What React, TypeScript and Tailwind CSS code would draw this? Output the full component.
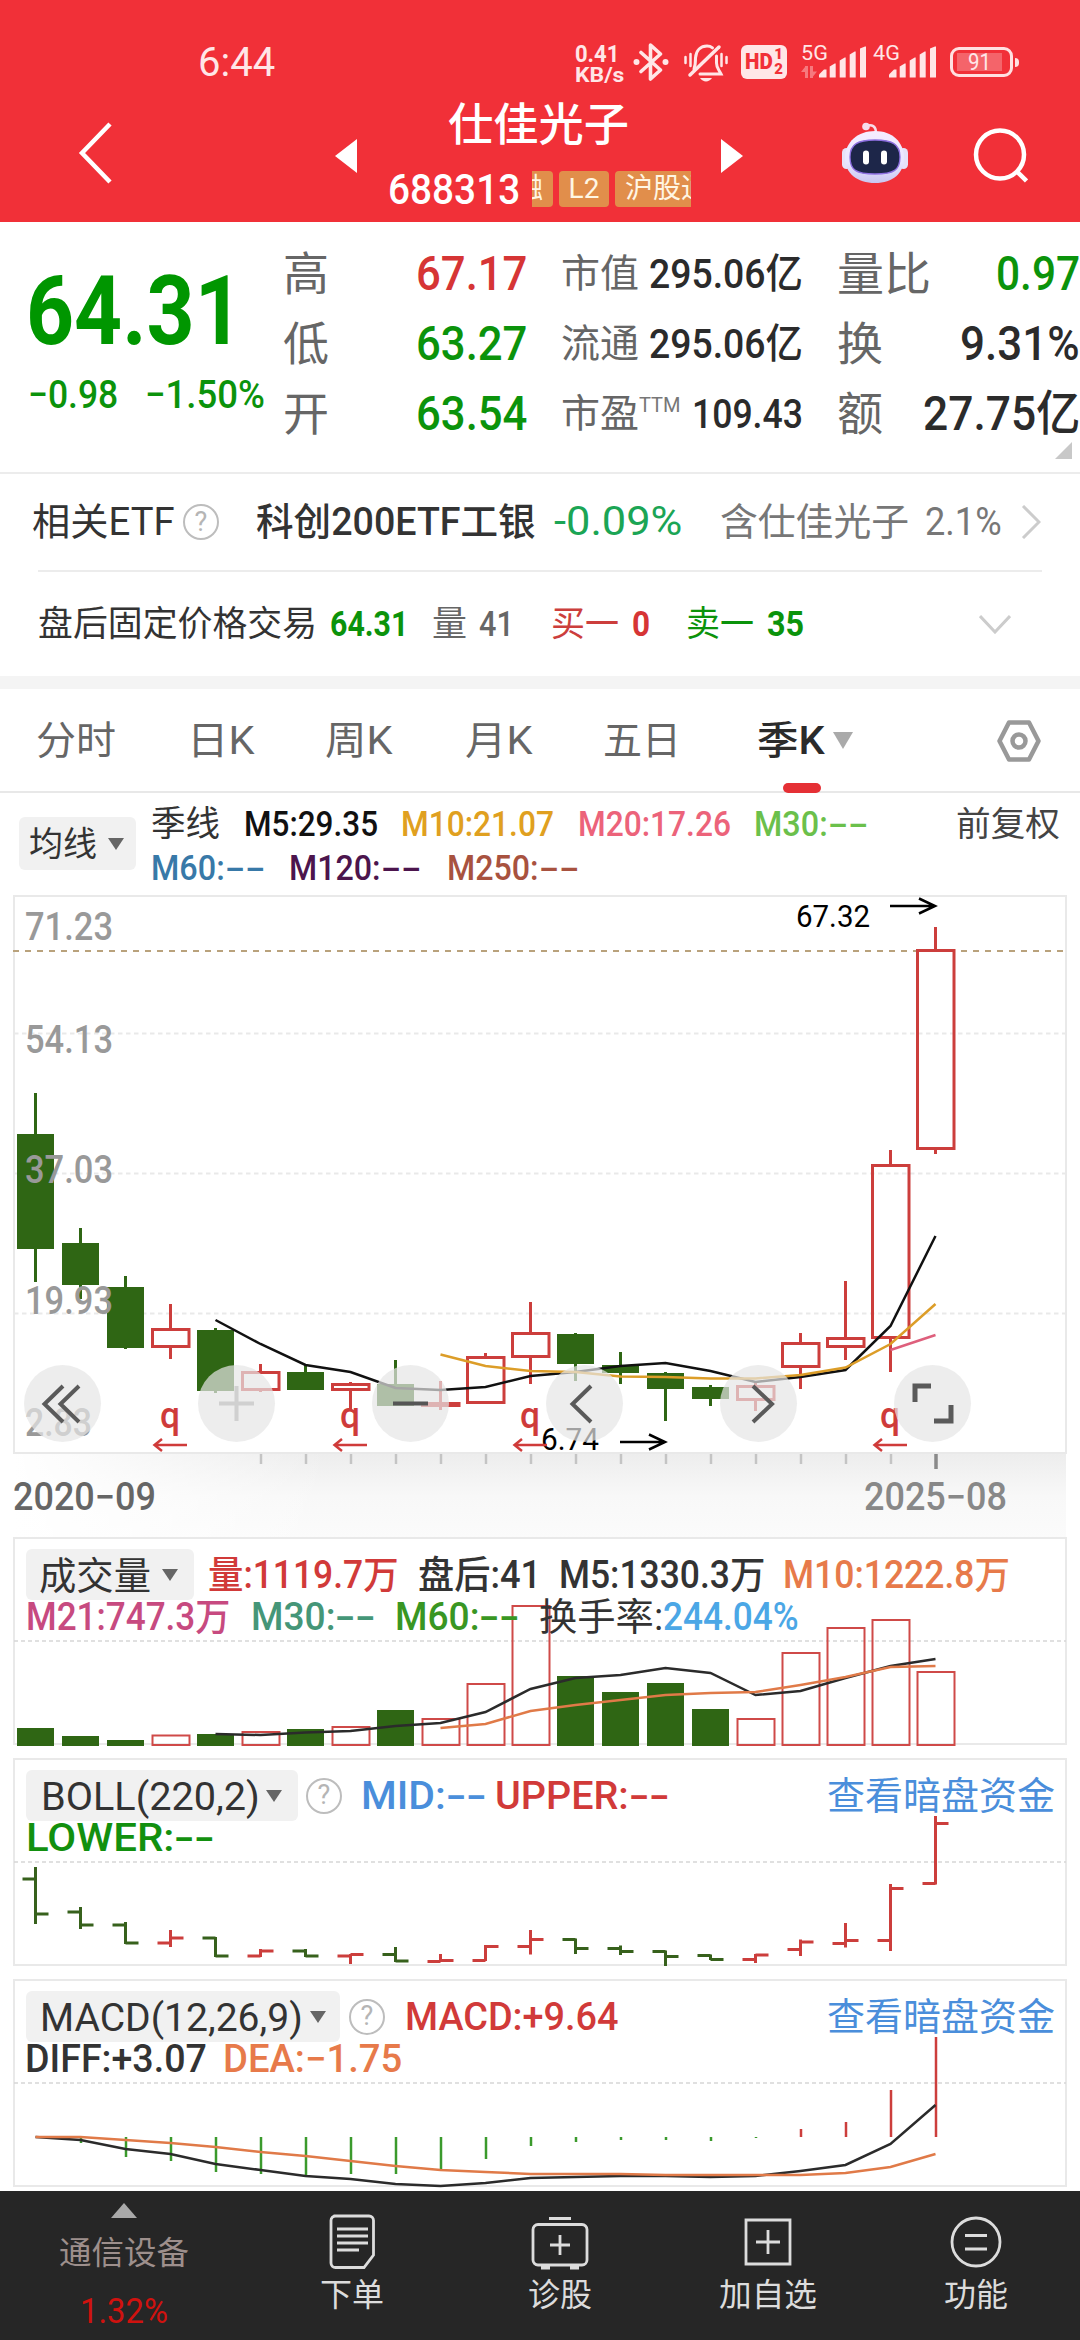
import { useLayoutEffect, useRef, useState } from 'react';
import type { ReactNode } from 'react';
import clsx from 'clsx';

const RED = '#cc3e3c';
const GREEN = '#2f6614';

// [up, high, bodyTop, bodyBottom, low]
const CANDLES: [number, number, number, number, number][] = [
    [0, 1093, 1134, 1249, 1282],
    [0, 1228, 1243, 1285, 1299],
    [0, 1276, 1287, 1348, 1349],
    [1, 1304, 1328, 1348, 1359],
    [0, 1328, 1330, 1391, 1393],
    [1, 1364, 1371, 1391, 1392],
    [0, 1365, 1372, 1390, 1390],
    [1, 1382, 1383, 1391, 1410],
    [0, 1360, 1384, 1406, 1406],
    [1, 1381, 1402, 1407, 1410],
    [1, 1353, 1356, 1404, 1404],
    [1, 1302, 1332, 1358, 1384],
    [0, 1333, 1334, 1364, 1381],
    [0, 1352, 1365, 1373, 1384],
    [0, 1372, 1373, 1389, 1421],
    [0, 1385, 1387, 1399, 1406],
    [1, 1382, 1385, 1401, 1411],
    [1, 1333, 1342, 1368, 1389],
    [1, 1281, 1337, 1348, 1360],
    [1, 1150, 1164, 1339, 1372],
    [1, 927, 949, 1150, 1154],
];

const MA5 = [1320, 1344, 1365, 1372, 1388, 1390, 1387, 1376, 1372, 1366, 1363, 1371, 1382, 1377, 1370, 1326, 1236];
const MA10 = [1354.5, 1366, 1371, 1372, 1376.5, 1377, 1378.5, 1378.5, 1375, 1367.5, 1344, 1304];
const MA20 = [1350, 1335];

const VOLUMES = [
    1728, 1736, 1740, 1735.5, 1734, 1732, 1729, 1727, 1710, 1719, 1684, 1606, 1676, 1692, 1683, 1709, 1719, 1653,
    1628, 1620, 1672,
];
const VOL_MA5 = [1734, 1735, 1732.5, 1731, 1726, 1723, 1712, 1689, 1678, 1675, 1668, 1673, 1695, 1691, 1678, 1666, 1659];
const VOL_MA10 = [1728, 1724, 1711, 1705, 1700, 1695, 1693, 1692, 1685, 1677, 1667, 1666];

// [high, low, open, close]
const OHLC = [
    [1867, 1924, 1879, 1914],
    [1907, 1929, 1912, 1925],
    [1922, 1944, 1925, 1943],
    [1930, 1947, 1943, 1938],
    [1937, 1957, 1938, 1956],
    [1949, 1957, 1956, 1951],
    [1949, 1957, 1951, 1956],
    [1954, 1964, 1956, 1954.5],
    [1947, 1962, 1954.5, 1961],
    [1954, 1962, 1961.5, 1960.5],
    [1945, 1961, 1960.5, 1946.5],
    [1930, 1954.5, 1946.5, 1939.5],
    [1938.5, 1954, 1939.5, 1948.5],
    [1945.5, 1955, 1948.5, 1951.5],
    [1950.5, 1966, 1951.5, 1956.5],
    [1954.5, 1960, 1955.5, 1959.5],
    [1954, 1963, 1959.5, 1955],
    [1939.5, 1956, 1949.5, 1942],
    [1923, 1947.5, 1943.5, 1940.5],
    [1884, 1951, 1940.5, 1888.5],
    [1816, 1884.5, 1883.5, 1823.5],
];

const MACD = [
    2137, 2143, 2157, 2161, 2172, 2174, 2175, 2174, 2174, 2169, 2159, 2146, 2142, 2140, 2140, 2141, 2138, 2129, 2122,
    2090, 2037,
];
const DIFF = [
    2137, 2140, 2149, 2154, 2164, 2170, 2176, 2179, 2184, 2186, 2183, 2178, 2177, 2176, 2176, 2177, 2176, 2171, 2165,
    2144, 2105,
];
const DEA = [
    2137, 2137, 2140, 2143, 2147, 2152, 2156, 2161, 2166, 2170, 2172, 2174, 2174, 2174, 2175, 2175, 2175, 2175, 2173,
    2167, 2154,
];

const cx = (i: number) => 35.5 + 45 * i;
const points = (ys: number[], start = 0) => ys.map((y, i) => `${cx(start + i)},${y}`).join(' ');

// Squeezes a label horizontally so that it always takes exactly `w` pixels.
function Fit({ w, className, children }: { w: number; className?: string; children: ReactNode }) {
    const ref = useRef<HTMLSpanElement>(null);
    const [scale, setScale] = useState(1);

    useLayoutEffect(() => {
        if (ref.current) setScale(w / ref.current.offsetWidth);
    }, [w]);

    return (
        <span className={clsx('block shrink-0 whitespace-nowrap', className)} style={{ width: w }}>
            <span ref={ref} className="inline-block origin-left" style={{ transform: `scaleX(${scale})` }}>
                {children}
            </span>
        </span>
    );
}

// An indicator that has no value yet: its name, then two wide dashes.
function Empty({ w, name, className }: { w: number; name: string; className?: string }) {
    return (
        <span className={clsx('flex shrink-0', className)}>
            <Fit w={w - 41}>{name}:</Fit>
            <Fit w={41}>--</Fit>
        </span>
    );
}

function Caret({ className }: { className?: string }) {
    return (
        <svg viewBox="0 0 16 12" className={clsx('h-3 w-4 shrink-0', className)}>
            <path d="M0 0h16L8 12z" fill="currentColor" />
        </svg>
    );
}

function Help({ className }: { className?: string }) {
    return (
        <span
            className={clsx(
                'flex size-[36px] shrink-0 items-center justify-center rounded-full border-[2.5px] border-[#bdbdbd] text-[27px] leading-none text-[#b5b5b5]',
                className,
            )}
        >
            ?
        </span>
    );
}

function Signal() {
    return (
        <svg viewBox="0 0 48 32" className="h-8 w-12 shrink-0" fill="#ffe6e7">
            <path d="M0 31.500v-3l5-5h2.500v8z" />
            <path d="M10.700 31.500v-11l5-3h1v14z" />
            <path d="M20.700 31.500v-17l5-3h1v20z" />
            <path d="M30.700 31.500v-23l5-3h1v26z" />
            <path d="M41 31.500v-29l5-2h1v31z" />
        </svg>
    );
}

function StatusBar() {
    return (
        <div className="flex h-[98px] items-start pt-[43px] text-[#ffe6e7]">
            <Fit w={77} className="ml-[198px] text-[40px] leading-[40px]">6:44</Fit>
            <div className="ml-[300px] flex w-[50px] flex-col pt-[2px] font-bold">
                <Fit w={44} className="text-[23px] leading-[20px]">0.41</Fit>
                <Fit w={49} className="text-[21px] leading-[20px]">KB/s</Fit>
            </div>
            <svg viewBox="0 0 36 38" className="ml-[8px] h-[38px] w-9" fill="none" stroke="currentColor" strokeWidth="3.600" strokeLinejoin="round" strokeLinecap="round">
                <path d="M8 9.500 27.500 27 17.500 36V2L27.500 11 8 28.500" />
                <circle cx="3.500" cy="19" r="3" fill="currentColor" stroke="none" />
                <circle cx="32.500" cy="19" r="3" fill="currentColor" stroke="none" />
            </svg>
            <svg viewBox="0 0 44 38" className="ml-[15px] mt-px h-[38px] w-11" fill="none" stroke="currentColor" strokeWidth="3" strokeLinecap="round">
                <path d="M1.500 13v6M6.500 10v12M42.500 13v6M37.500 10v12" strokeWidth="2.500" />
                <path d="M6 31 35 3" strokeWidth="3.500" />
                <path d="M10 25c1.500-4 1.500-7 1.500-11C12 6 17 2 23 2c2 0 4 .6 5.500 1.800M32.500 12v7c0 5 2 6 4.500 11H16" />
                <path d="M16 34c3 4.500 9 4.500 12 0z" fill="currentColor" stroke="none" />
            </svg>
            <div className="ml-[13px] mt-[2px] flex h-[34px] w-[46px] items-center justify-center rounded-[6px] bg-[#ffe6e7] text-[#f13038]">
                <Fit w={28} className="text-[22px] leading-none font-black">HD</Fit>
                <span className="ml-px flex flex-col text-[15px] leading-[15px] font-black">
                    <span>1</span>
                    <span>2</span>
                </span>
            </div>
            <div className="ml-[14px] flex w-[18px] flex-col">
                <Fit w={27} className="text-[20px] leading-5">5G</Fit>
                <svg viewBox="0 0 16 12" className="mt-[3px] h-3 w-4 opacity-40" fill="currentColor">
                    <path d="M4 12V0h3v12zM0 6l4-5v5zM9 12V0h3v12zM16 5.500l-4 5v-5z" />
                </svg>
            </div>
            <div className="mt-[3px]">
                <Signal />
            </div>
            <Fit w={27} className="ml-[6px] text-[20px] leading-5">4G</Fit>
            <div className="-ml-[11px] mt-[3px]">
                <Signal />
            </div>
            <div className="ml-[13px] mt-[4px] flex h-[30px] w-[63px] items-center rounded-[9px] border-[3px] border-[#ffe0e1] p-1">
                <div className="flex h-[18px] w-[45px] items-center justify-center bg-white/25">
                    <Fit w={23} className="text-[24px] leading-[18px]">91</Fit>
                </div>
            </div>
            <div className="ml-[2px] mt-[15px] h-[9px] w-1 rounded-r bg-[#ffe0e1]" />
        </div>
    );
}

function Robot() {
    return (
        <svg viewBox="0 0 66 62" className="h-[62px] w-[66px]">
            <defs>
                <linearGradient id="shell" x1="0" y1="0" x2="0" y2="1">
                    <stop offset="0" stopColor="#f6ecff" />
                    <stop offset="0.600" stopColor="#e9e6ff" />
                    <stop offset="1" stopColor="#c9c6f0" />
                </linearGradient>
            </defs>
            <path d="M24 4c6-2 10 0 10 7" fill="none" stroke="#f8dbe8" strokeWidth="2.500" />
            <circle cx="24" cy="4.500" r="3.800" fill="#f6dcec" />
            <rect x="0" y="26" width="9" height="21" rx="4.500" fill="#e6e2f8" />
            <rect x="57" y="26" width="9" height="21" rx="4.500" fill="#e6e2f8" />
            <path d="M33 9c17 0 29 11 29 27 0 15-11 25-29 25S3 51 3 36C3 20 16 9 33 9z" fill="url(#shell)" />
            <path d="M33 18c17 0 25 4 25 17s-6 17-25 17S8 48 8 35s8-17 25-17z" fill="#1d2649" stroke="#8d6fe0" strokeWidth="1.300" />
            <rect x="21" y="28.500" width="6" height="14" rx="3" fill="#fff" />
            <rect x="39" y="28.500" width="6" height="14" rx="3" fill="#fff" />
        </svg>
    );
}

function TitleBar() {
    return (
        <div className="flex h-[124px] items-start text-white">
            <svg viewBox="0 0 34 62" className="ml-[78px] mt-[24px] h-[62px] w-[34px]" fill="none" stroke="currentColor" strokeWidth="4.500">
                <path d="M32 2 4 31l28 29" />
            </svg>
            <svg viewBox="0 0 22 34" className="ml-[223px] mt-[41px] h-[34px] w-[22px]">
                <path d="M22 0v34L0 17z" fill="currentColor" />
            </svg>
            <div className="ml-[31px] flex w-[304px] flex-col">
                <Fit w={181} className="ml-[60px] mt-[2px] text-[45px] leading-[52px] font-medium">仕佳光子</Fit>
                <div className="mt-[19px] flex h-[36px] items-center">
                    <Fit w={132} className="mt-[2px] text-[42px] leading-9 font-medium">688313</Fit>
                    <div className="ml-[12px] flex h-9 w-[159px] justify-end overflow-hidden text-[28px] leading-9 text-[#fff6e4]">
                        <span className="-ml-12 shrink-0 rounded-[4px] bg-[#e18e4b] pr-[10px]">融</span>
                        <span className="ml-[6px] w-[50px] shrink-0 rounded-[4px] bg-[#e18e4b] text-center">L2</span>
                        <span className="-mr-[27px] ml-[6px] w-[103px] shrink-0 rounded-[4px] bg-[#e18e4b] pl-[10px]">沪股通</span>
                    </div>
                </div>
            </div>
            <svg viewBox="0 0 22 34" className="ml-[29px] mt-[41px] h-[34px] w-[22px]">
                <path d="M0 0v34l22-17z" fill="currentColor" />
            </svg>
            <div className="ml-[99px] mt-[24px]">
                <Robot />
            </div>
            <svg viewBox="0 0 56 56" className="ml-[64px] mt-[29px] size-14" fill="none" stroke="currentColor" strokeWidth="4.500">
                <circle cx="28" cy="27.500" r="24" />
                <path d="m44.500 44 10 10" />
            </svg>
        </div>
    );
}

const QUOTES = [
    { a: '高', av: '67.17', ac: 'text-[#d63535]', b: '市值', bv: '295.06亿', bw: 154, c: '量比', cw: 94, cv: '0.97', cc: 'text-[#0b930b]', vw: 84 },
    { a: '低', av: '63.27', ac: 'text-[#0b930b]', b: '流通', bv: '295.06亿', bw: 154, c: '换', cw: 46, cv: '9.31%', cc: 'text-[#2b2b2b]', vw: 120 },
    { a: '开', av: '63.54', ac: 'text-[#0b930b]', b: '市盈', bv: '109.43', bw: 111, c: '额', cw: 46, cv: '27.75亿', cc: 'text-[#2b2b2b]', vw: 157 },
];

function Quote() {
    return (
        <section className="relative flex h-[252px] border-b-2 border-[#ececec]">
            <div className="w-[283px] shrink-0 text-[#009600]">
                <Fit w={217} className="ml-[26px] mt-[41px] text-[97px] leading-[97px] font-bold">64.31</Fit>
                <div className="mt-[13px] flex text-[39px] leading-[44px] font-medium text-[#0b930b]">
                    <Fit w={90} className="ml-[28px]">−0.98</Fit>
                    <Fit w={120} className="ml-[27px]">−1.50%</Fit>
                </div>
            </div>
            <div className="pt-[17px]">
                {QUOTES.map(q => (
                    <div key={q.a} className="flex h-[70px] w-[797px] items-center">
                        <span className="w-[46px] text-[46px] leading-[70px] text-[#666]">{q.a}</span>
                        <Fit w={111} className={clsx('ml-[87px] text-[48px] leading-[70px] font-medium', q.ac)}>{q.av}</Fit>
                        <span className="ml-[34px] w-[78px] text-[39px] leading-[70px] text-[#666]">{q.b}</span>
                        <span className="flex w-[164px] justify-end text-[#2b2b2b]">
                            {q.b === '市盈' && <Fit w={42} className="mt-[6px] mr-auto text-[21px] leading-[40px] text-[#777]">TTM</Fit>}
                            <Fit w={q.bw} className="text-[41px] leading-[70px] font-medium">{q.bv}</Fit>
                        </span>
                        <Fit w={q.cw} className="ml-[34px] text-[46px] leading-[70px] text-[#666]">{q.c}</Fit>
                        <Fit w={q.vw} className={clsx('ml-auto text-[48px] leading-[70px] font-medium', q.cc)}>{q.cv}</Fit>
                    </div>
                ))}
            </div>
            <svg viewBox="0 0 17 17" className="absolute right-2 bottom-[13px] size-[17px]">
                <path d="M17 0v17H0z" fill="#c8c8c8" />
            </svg>
        </section>
    );
}

function EtfRow() {
    return (
        <div className="flex h-24 items-center text-[38px] leading-[60px] text-[#333]">
            <Fit w={143} className="ml-8">相关ETF</Fit>
            <Help className="ml-[8px]" />
            <Fit w={280} className="ml-[37px] font-medium">科创200ETF工银</Fit>
            <Fit w={128} className="ml-[18px] text-[40px] text-[#1ba555]">-0.09%</Fit>
            <Fit w={189} className="ml-[38px] text-[#777]">含仕佳光子</Fit>
            <Fit w={77} className="ml-[16px] text-[#777]">2.1%</Fit>
            <svg viewBox="0 0 20 34" className="ml-[19px] h-[34px] w-5" fill="none" stroke="#ccc" strokeWidth="3">
                <path d="m2 1 16 16L2 33" />
            </svg>
        </div>
    );
}

function AfterHours() {
    return (
        <div className="mx-[38px] flex h-[106px] items-center border-t-2 border-[#ececec] pt-px text-[35px] leading-[60px]">
            <Fit w={279} className="text-[#333]">盘后固定价格交易</Fit>
            <Fit w={78} className="ml-[13px] font-bold text-[#0b930b]">64.31</Fit>
            <Fit w={35} className="ml-[24px] text-[#666]">量</Fit>
            <Fit w={35} className="ml-[12px] font-medium text-[#666]">41</Fit>
            <Fit w={68} className="ml-[37px] text-[#cc3e3c]">买一</Fit>
            <Fit w={18} className="ml-[13px] font-bold text-[#d63535]">0</Fit>
            <Fit w={68} className="ml-[36px] text-[#0b930b]">卖一</Fit>
            <Fit w={37} className="ml-[13px] font-bold text-[#0b930b]">35</Fit>
            <svg viewBox="0 0 32 19" className="mr-[31px] ml-auto h-[19px] w-8" fill="none" stroke="#ccc" strokeWidth="3">
                <path d="m1 1 15 16L31 1" />
            </svg>
        </div>
    );
}

function PeriodTabs() {
    return (
        <nav className="relative flex h-[104px] items-center border-b-2 border-[#e8e8e8] pt-px text-[39px] leading-[60px] text-[#666]">
            <Fit w={80} className="ml-[36px]">分时</Fit>
            <Fit w={67} className="ml-[71px]">日K</Fit>
            <Fit w={67} className="ml-[71px]">周K</Fit>
            <Fit w={67} className="ml-[73px]">月K</Fit>
            <Fit w={78} className="ml-[71px]">五日</Fit>
            <Fit w={68} className="ml-[76px] font-medium text-[#2b2b2b]">季K</Fit>
            <svg viewBox="0 0 20 17" className="ml-[8px] h-[17px] w-5">
                <path d="M0 0h20L10 17z" fill="#aaa" />
            </svg>
            <svg viewBox="0 0 44 42" className="ml-[144px] h-[42px] w-11" fill="none" stroke="#999" strokeWidth="4.500" strokeLinejoin="round">
                <path d="M12 2.500h20L41.500 21 32 39.500H12L2.500 21z" />
                <circle cx="22" cy="21" r="6.500" />
            </svg>
            <span className="absolute -bottom-[2px] left-[783px] h-[10px] w-[38px] rounded-[5px] bg-[#e53035]" />
        </nav>
    );
}

function Averages() {
    return (
        <div className="flex h-[102px] text-[35px] leading-[44px]">
            <button className="mt-[24px] ml-[19px] flex h-[53px] w-[117px] items-center rounded-[6px] bg-[#f1f1f1] pl-[10px] text-[34px] text-[#333]">
                <Fit w={68}>均线</Fit>
                <Caret className="ml-[11px] text-[#666]" />
            </button>
            <div className="mt-[10px] ml-[15px] w-[720px]">
                <div className="flex h-11">
                    <Fit w={69} className="text-[#333]">季线</Fit>
                    <Fit w={134} className="ml-[24px] font-medium text-[#111]">M5:29.35</Fit>
                    <Fit w={153} className="ml-[23px] font-medium text-[#e0a020]">M10:21.07</Fit>
                    <Fit w={153} className="ml-[24px] font-medium text-[#ec637a]">M20:17.26</Fit>
                    <Empty w={115} name="M30" className="ml-[23px] font-medium text-[#6bc04b]" />
                </div>
                <div className="flex h-11">
                    <Empty w={115} name="M60" className="font-medium text-[#3879a8]" />
                    <Empty w={133} name="M120" className="ml-[23px] font-medium text-[#4c154d]" />
                    <Empty w={133} name="M250" className="ml-[25px] font-medium text-[#a8523f]" />
                </div>
            </div>
            <Fit w={104} className="mt-[9px] ml-[85px] text-[34px] text-[#444]">前复权</Fit>
        </div>
    );
}

function Grid({ y }: { y: number }) {
    return <path d={`M14 ${y}H1066`} stroke="#d6d6d6" strokeWidth="1.500" strokeDasharray="4 3" />;
}

const TOOLS = [
    { x: 62.5, d: 'M63 1386l-18.500 18 18.500 18M79 1386l-18.500 18 18.500 18', c: '#5a5a5a' },
    { x: 236.5, d: 'M219 1403.500h35M236.500 1386v35', c: '#d0d0d0' },
    { x: 410.500, d: 'M393 1403.500h35', c: '#555' },
    { x: 584.5, d: 'M591 1386l-18.500 18 18.500 18', c: '#5a5a5a' },
    { x: 758.5, d: 'M753 1386l19 18-19 18', c: '#5a5a5a' },
    { x: 932.5, d: 'M931 1386h-16v16M934 1421h17v-16', c: '#5a5a5a' },
];

const PRICES: [string, number, number][] = [
    ['71.23', 940, 88],
    ['54.13', 1053, 88],
    ['37.03', 1183, 88],
    ['19.93', 1314, 88],
    ['2.83', 1436, 67],
];

function CandleChart() {
    return (
        <svg viewBox="0 895 1080 643" className="block h-[643px] w-full">
            <defs>
                <linearGradient id="haze" x1="0" y1="0" x2="0" y2="1">
                    <stop offset="0" stopColor="#ededed" />
                    <stop offset="0.500" stopColor="#f8f8f8" />
                    <stop offset="1" stopColor="#fbfbfb" />
                </linearGradient>
                <linearGradient id="hazeFade" x1="0" y1="0" x2="1" y2="0">
                    <stop offset="0" stopColor="#fff" />
                    <stop offset="0.300" stopColor="#fff" stopOpacity="0" />
                </linearGradient>
            </defs>
            <rect x="14" y="1454" width="1052" height="84" fill="url(#haze)" />
            <rect x="14" y="1454" width="1052" height="84" fill="url(#hazeFade)" />
            <rect x="14" y="896" width="1052" height="557" fill="#fff" stroke="#e9e9e9" strokeWidth="2" />
            {[1033.5, 1173.5, 1313.5].map(y => (
                <path key={y} d={`M14 ${y}H1066`} stroke="#e9e9e9" strokeWidth="2" strokeDasharray="4.500 3.500" />
            ))}
            <path d="M13 951H1066" stroke="#b9a27c" strokeWidth="2" strokeDasharray="6 6" />

            {CANDLES.map(([up, high, top, bottom, low], i) => (
                <g key={i} stroke={up ? RED : GREEN} strokeWidth="3" fill={up ? 'none' : GREEN}>
                    <path d={`M${cx(i)} ${high}V${top}M${cx(i)} ${bottom}V${low}`} />
                    {up ? (
                        <rect x={cx(i) - 18} y={top + 1.5} width="36.500" height={bottom - top - 3} />
                    ) : (
                        <rect x={cx(i) - 18.5} y={top} width="37" height={bottom - top} stroke="none" />
                    )}
                </g>
            ))}
            <polyline points={points(MA5, 4)} fill="none" stroke="#111" strokeWidth="2.500" />
            <polyline points={points(MA10, 9)} fill="none" stroke="#dc9d28" strokeWidth="2.500" />
            <polyline points={points(MA20, 19)} fill="none" stroke="#de5f7c" strokeWidth="2.500" />

            <g fill="#999" className="text-[38px] font-medium">
                {PRICES.map(([label, y, w]) => (
                    <text key={label} x="25" y={y} textLength={w} lengthAdjust="spacingAndGlyphs">{label}</text>
                ))}
            </g>
            <g className="text-[32px]">
                <text x="796" y="927" textLength="74" lengthAdjust="spacingAndGlyphs">67.32</text>
                <text x="541" y="1450" textLength="58" lengthAdjust="spacingAndGlyphs">6.74</text>
            </g>
            <path d="M890 906h45m-16-7.500 16 7.500-16 7.500M620 1442h45m-16-7.500 16 7.500-16 7.500" fill="none" stroke="#000" strokeWidth="2.500" />
            {[170, 350, 530, 890].map(x => (
                <g key={x}>
                    <text x={x - 10} y="1428" fill="#cf3b3a" textLength="20" lengthAdjust="spacingAndGlyphs" className="text-[36px] font-medium">q</text>
                    <path d={`M${x + 17} 1445h-32m7-6-7.500 6 7.500 6`} fill="none" stroke="#cf3b3a" strokeWidth="2.500" />
                </g>
            ))}
            {TOOLS.map(t => (
                <g key={t.x}>
                    <circle cx={t.x} cy="1403.500" r="38.500" fill="#e5e5e5" fillOpacity="0.700" />
                    <path d={t.d} fill="none" stroke={t.c} strokeWidth={t.x > 900 ? 5 : 4} />
                </g>
            ))}

            {CANDLES.map((_, i) =>
                i < 5 || i > 19 ? null : <path key={i} d={`M${cx(i) + 0.5} 1454v10`} stroke="#c4c4c4" strokeWidth="2.500" />,
            )}
            <path d="M936 1454v15" stroke="#8a8a8a" strokeWidth="3.500" />
            <g className="text-[38px] font-medium">
                <text x="13" y="1510" fill="#666" textLength="143" lengthAdjust="spacingAndGlyphs">2020−09</text>
                <text x="864" y="1510" fill="#888" textLength="143" lengthAdjust="spacingAndGlyphs">2025−08</text>
            </g>
        </svg>
    );
}

function Panel({ top, chart, children }: { top: number; chart: ReactNode; children: ReactNode }) {
    return (
        <section className="relative mx-[13px] mb-[13px] h-[208px] border-2 border-[#e9e9e9] text-[38px] leading-10">
            <svg viewBox={`14 ${top} 1052 206`} className="absolute -top-px -left-px h-[206px] w-[1052px] overflow-visible">
                <Grid y={top + 103} />
                {chart}
            </svg>
            <div className="relative">{children}</div>
        </section>
    );
}

function Picker({ w, label, className }: { w: number; label: string; className: string }) {
    return (
        <button className={clsx('flex h-[51px] shrink-0 items-center rounded-[6px] bg-[#f1f1f1] text-[#333]', className)}>
            <Fit w={w} className="mt-[3px]">{label}</Fit>
            <Caret className="ml-[11px] text-[#666]" />
        </button>
    );
}

function VolumePanel() {
    const chart = (
        <>
            {VOLUMES.map((y, i) =>
                CANDLES[i][0] ? (
                    <rect key={i} x={cx(i) - 18} y={y} width="37" height={1745 - y} fill="none" stroke="#cf4a48" strokeWidth="2" />
                ) : (
                    <rect key={i} x={cx(i) - 18.5} y={y} width="37" height={1746 - y} fill={GREEN} />
                ),
            )}
            <polyline points={points(VOL_MA5, 4)} fill="none" stroke="#2b2b2b" strokeWidth="2.500" />
            <polyline points={points(VOL_MA10, 9)} fill="none" stroke="#e07a48" strokeWidth="2.500" />
        </>
    );
    return (
        <Panel top={1538} chart={chart}>
            <div className="flex h-[61px] items-center pt-[10px]">
                <Picker w={112} label="成交量" className="ml-[11px] w-[168px] pl-[13px]" />
                <Fit w={191} className="ml-[14px] font-medium text-[#d13a39]">量:1119.7万</Fit>
                <Fit w={123} className="ml-[19px] font-medium text-[#333]">盘后:41</Fit>
                <Fit w={206} className="ml-[18px] font-medium text-[#333]">M5:1330.3万</Fit>
                <Fit w={227} className="ml-[18px] font-medium text-[#e77a4a]">M10:1222.8万</Fit>
            </div>
            <div className="-mt-[3px] flex font-medium">
                <Fit w={204} className="ml-[11px] text-[#c74a80]">M21:747.3万</Fit>
                <Empty w={125} name="M30" className="ml-[21px] text-[#459678]" />
                <Empty w={125} name="M60" className="ml-[19px] text-[#399623]" />
                <Fit w={124} className="ml-[19px] font-normal text-[#333]">换手率:</Fit>
                <Fit w={136} className="text-[#4ba7e6]">244.04%</Fit>
            </div>
        </Panel>
    );
}

function BollPanel() {
    const chart = OHLC.map(([high, low, open, close], i) => (
        <path
            key={i}
            d={`M${cx(i)} ${high}V${low}M${cx(i) - 13} ${open}h13M${cx(i)} ${close}h13`}
            stroke={CANDLES[i][0] ? RED : '#37611c'}
            strokeWidth="3"
        />
    ));
    return (
        <Panel top={1759} chart={chart}>
            <div className="flex h-[61px] items-center pt-[10px]">
                <Picker w={219} label="BOLL(220,2)" className="ml-[11px] w-[272px] pl-[10px]" />
                <Help className="ml-[8px]" />
                <Empty w={126} name="MID" className="ml-[19px] font-medium text-[#4a8edb]" />
                <Empty w={175} name="UPPER" className="ml-[8px] font-medium text-[#d13a39]" />
                <Fit w={228} className="mr-[10px] ml-auto text-[#4a8edb]">查看暗盘资金</Fit>
            </div>
            <Empty w={189} name="LOWER" className="-mt-[3px] ml-[11px] font-medium text-[#12900f]" />
        </Panel>
    );
}

function MacdPanel() {
    const chart = (
        <>
            {MACD.map((y, i) => (
                <path key={i} d={`M${cx(i) + 0.5} 2137V${y}`} stroke={y > 2137 ? '#3b9a2c' : RED} strokeWidth="2.500" />
            ))}
            <polyline points={points(DIFF)} fill="none" stroke="#2b2b2b" strokeWidth="2.500" />
            <polyline points={points(DEA)} fill="none" stroke="#e07a48" strokeWidth="2.500" />
        </>
    );
    return (
        <Panel top={1980} chart={chart}>
            <div className="flex h-[61px] items-center pt-[10px]">
                <Picker w={263} label="MACD(12,26,9)" className="ml-[11px] w-[314px] pl-[10px]" />
                <Help className="ml-[9px]" />
                <Fit w={214} className="ml-[20px] font-medium text-[#d13a39]">MACD:+9.64</Fit>
                <Fit w={228} className="mr-[10px] ml-auto text-[#4a8edb]">查看暗盘资金</Fit>
            </div>
            <div className="-mt-[3px] flex font-medium">
                <Fit w={182} className="ml-[10px] text-[#333]">DIFF:+3.07</Fit>
                <Fit w={179} className="ml-[16px] text-[#e77a4a]">DEA:−1.75</Fit>
            </div>
        </Panel>
    );
}

const ACTIONS = [
    {
        label: '下单',
        w: 64,
        icon: (
            <path d="M11.500 4H47a4.500 4.500 0 0 1 4.500 4.500V43L42 55.500H13.500A4.500 4.500 0 0 1 9 51V8.500A4.500 4.500 0 0 1 13.500 4M15 17h31M15 24h31M15 31h31M15 38h22" />
        ),
    },
    {
        label: '诊股',
        w: 64,
        icon: <path d="M19 6.500h22M8 12.500h44a5 5 0 0 1 5 5V48a5 5 0 0 1-5 5H8a5 5 0 0 1-5-5V17.500a5 5 0 0 1 5-5zM11 56h9M40 56h9M20 33h20M30 23v20" />,
    },
    {
        label: '加自选',
        w: 98,
        icon: <path d="M8 8h44v44H8zM18 30h24M30 18v24" />,
    },
    {
        label: '功能',
        w: 64,
        icon: (
            <>
                <circle cx="30" cy="30" r="24" />
                <path d="M19 23.500h22M19 37h22" />
            </>
        ),
    },
];

function BottomBar() {
    return (
        <footer className="flex h-[149px] bg-[#262626] text-[32px] leading-10 text-[#dcdcdc]">
            <div className="flex w-[248px] flex-col items-center pt-3">
                <svg viewBox="0 0 26 15" className="h-[15px] w-[26px]">
                    <path d="M13 0l13 15H0z" fill="#a9a9a9" />
                </svg>
                <Fit w={130} className="mt-[15px] text-[#9d8f8c]">通信设备</Fit>
                <Fit w={88} className="mt-[19px] text-[35px] text-[#d0120f]">1.32%</Fit>
            </div>
            {ACTIONS.map(a => (
                <div key={a.label} className="flex w-[208px] flex-col items-center pt-[21px]">
                    <svg viewBox="0 0 60 60" className="size-[60px]" fill="none" stroke="#dcdcdc" strokeWidth="2.800">
                        {a.icon}
                    </svg>
                    <Fit w={a.w} className="mt-[3px]">{a.label}</Fit>
                </div>
            ))}
        </footer>
    );
}

export default function App() {
    return (
        <div className="h-[2340px] w-[1080px] overflow-hidden bg-white font-['Roboto','Noto_Sans_CJK_SC',sans-serif]">
            <header className="bg-[#f13038]">
                <StatusBar />
                <TitleBar />
            </header>
            <Quote />
            <EtfRow />
            <AfterHours />
            <div className="h-[13px] bg-[#f4f4f4]" />
            <PeriodTabs />
            <Averages />
            <CandleChart />
            <div className="-mt-px">
                <VolumePanel />
                <BollPanel />
                <MacdPanel />
            </div>
            <div className="-mt-[9px]">
                <BottomBar />
            </div>
        </div>
    );
}
